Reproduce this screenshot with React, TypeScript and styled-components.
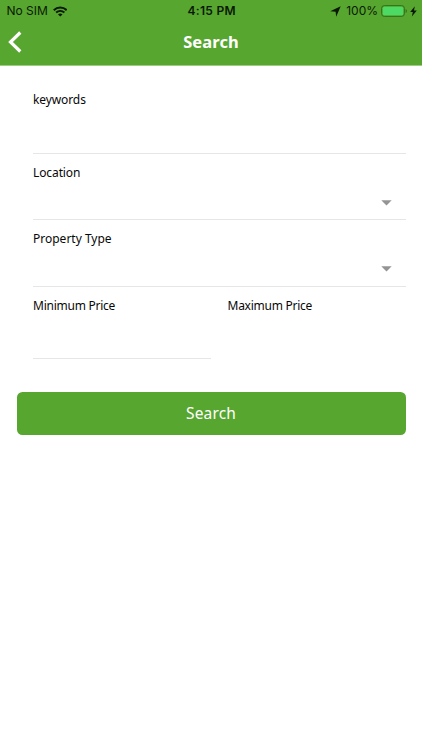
import React from 'react';
import styled, { createGlobalStyle } from 'styled-components';

const green = '#57a62f';

const GlobalStyle = createGlobalStyle`
  *, *::before, *::after { box-sizing: border-box; }
  body { margin: 0; background: #fff; }
`;

const Screen = styled.div`
  width: 422px;
  height: 750px;
  overflow: hidden;
  background: #fff;
  font-family: 'Noto Sans', sans-serif;
  color: #080808;
`;

const Header = styled.header`
  height: 66px;
  background: ${green};
  border-bottom: 1px solid #9dcb85;
`;

const StatusBar = styled.div`
  display: grid;
  grid-template-columns: 1fr auto 1fr;
  align-items: center;
  height: 22px;
  padding: 0 5px 0 6.5px;
  font-family: Inter, sans-serif;
  font-size: 12px;
  line-height: 22px;
  color: #0b1a05;
`;

const StatusGroup = styled.div<{ $end?: boolean }>`
  display: flex;
  align-items: center;
  justify-content: ${(p) => (p.$end ? 'flex-end' : 'flex-start')};
  svg { display: block; flex: none; }
`;

const StatusText = styled.span<{ $spacing?: number }>`
  letter-spacing: ${(p) => p.$spacing ?? 0}px;
  white-space: nowrap;
`;

const Clock = styled(StatusText)`
  font-weight: 600;
`;

const NavBar = styled.nav`
  display: grid;
  grid-template-columns: 60px 1fr 60px;
  align-items: center;
  height: 40px;
`;

const BackButton = styled.button`
  display: flex;
  padding: 0 0 0 8px;
  border: 0;
  background: none;
`;

const Title = styled.h1`
  margin: 0;
  font-size: 16.5px;
  line-height: 40px;
  font-weight: 700;
  letter-spacing: 0.1px;
  text-align: center;
  color: #fff;
`;

const Form = styled.form`
  padding: 21px 16.5px 0;
`;

const Fields = styled.div`
  padding-left: 16.5px;
`;

const Field = styled.div<{ $height: number; $top?: number; $line?: boolean }>`
  display: flex;
  flex-direction: column;
  height: ${(p) => p.$height}px;
  padding-top: ${(p) => p.$top ?? 10}px;
  border-bottom: 1px solid ${(p) => (p.$line === false ? 'transparent' : '#e6e6e6')};
`;

const Label = styled.label<{ $spacing?: number }>`
  font-size: 12px;
  line-height: 18px;
  letter-spacing: ${(p) => p.$spacing ?? 0}px;
  white-space: nowrap;
`;

const Picker = styled.div`
  display: flex;
  justify-content: flex-end;
  padding: 18px 13.5px 0 0;
  svg { display: block; }
`;

const PriceRow = styled.div`
  display: grid;
  grid-template-columns: 177.5px 178px;
  column-gap: 17px;
`;

const SubmitButton = styled.button`
  display: block;
  width: 100%;
  height: 43px;
  margin-top: 32.5px;
  padding: 0;
  border: 0;
  border-radius: 5.5px;
  background: ${green};
  color: #fff;
  font: 400 15.5px/43px 'Noto Sans', sans-serif;
  letter-spacing: 0.15px;
`;

const WifiIcon = () => (
  <svg width="14.5" height="11" viewBox="0 0 15 11" fill="none" stroke="#0b1a05">
    <path d="M.8 4.1C4.6.5 10.4.5 14.2 4.1" strokeWidth="2.1" />
    <path d="M3.2 6.6c2.5-2.2 6.1-2.2 8.6 0" strokeWidth="1.9" />
    <path d="M7.5 10.8 5.2 8.5c1.3-1.2 3.3-1.2 4.6 0Z" fill="#0b1a05" stroke="none" />
  </svg>
);

const LocationIcon = () => (
  <svg width="11" height="11" viewBox="0 0 11 11">
    <path d="M10.7.3 6.2 10.7 5.6 5.8.2 5.2Z" fill="#0b1a05" />
  </svg>
);

const BatteryIcon = () => (
  <svg width="27" height="12" viewBox="0 0 27 12">
    <rect x=".6" y=".6" width="22.8" height="10.8" rx="2.7" fill="none" stroke="#34701b" strokeWidth="1" />
    <rect x="1.8" y="1.8" width="20.4" height="8.4" rx="1.5" fill="#4cda64" />
    <path d="M24.6 4c1.8.6 1.8 3.4 0 4Z" fill="#34701b" />
  </svg>
);

const BoltIcon = () => (
  <svg width="7" height="11" viewBox="0 0 7 11">
    <path d="M4.8.3.2 6.1h2.6l-.9 4.5 4.9-6H4Z" fill="#0b1a05" />
  </svg>
);

const BackIcon = () => (
  <svg width="14" height="22" viewBox="0 0 14 22">
    <path d="M12.3 1.5 2.5 11l9.8 9.5" fill="none" stroke="#fff" strokeWidth="3.2" />
  </svg>
);

const Caret = () => (
  <svg width="11" height="6" viewBox="0 0 11 6">
    <path d="M.3.3h10.4L5.5 5.6Z" fill="#949494" />
  </svg>
);

const Gap = styled.span<{ $w: number }>`
  flex: none;
  width: ${(p) => p.$w}px;
`;

export default function App() {
  return (
    <>
      <GlobalStyle />
      <Screen>
        <Header>
          <StatusBar>
            <StatusGroup>
              <StatusText>No SIM</StatusText>
              <Gap $w={5} />
              <WifiIcon />
            </StatusGroup>
            <Clock $spacing={0.3}>4:15 PM</Clock>
            <StatusGroup $end>
              <LocationIcon />
              <Gap $w={5} />
              <StatusText>100%</StatusText>
              <Gap $w={3} />
              <BatteryIcon />
              <Gap $w={2} />
              <BoltIcon />
            </StatusGroup>
          </StatusBar>
          <NavBar>
            <BackButton type="button" aria-label="Back">
              <BackIcon />
            </BackButton>
            <Title>Search</Title>
          </NavBar>
        </Header>
        <Form>
          <Fields>
            <Field $height={67} $top={4}>
              <Label $spacing={-0.1}>keywords</Label>
            </Field>
            <Field $height={66}>
              <Label $spacing={-0.1}>Location</Label>
              <Picker><Caret /></Picker>
            </Field>
            <Field $height={67}>
              <Label>Property Type</Label>
              <Picker><Caret /></Picker>
            </Field>
            <PriceRow>
              <Field $height={72}>
                <Label $spacing={-0.25}>Minimum Price</Label>
              </Field>
              <Field $height={72} $line={false}>
                <Label $spacing={-0.25}>Maximum Price</Label>
              </Field>
            </PriceRow>
          </Fields>
          <SubmitButton type="button">Search</SubmitButton>
        </Form>
      </Screen>
    </>
  );
}
